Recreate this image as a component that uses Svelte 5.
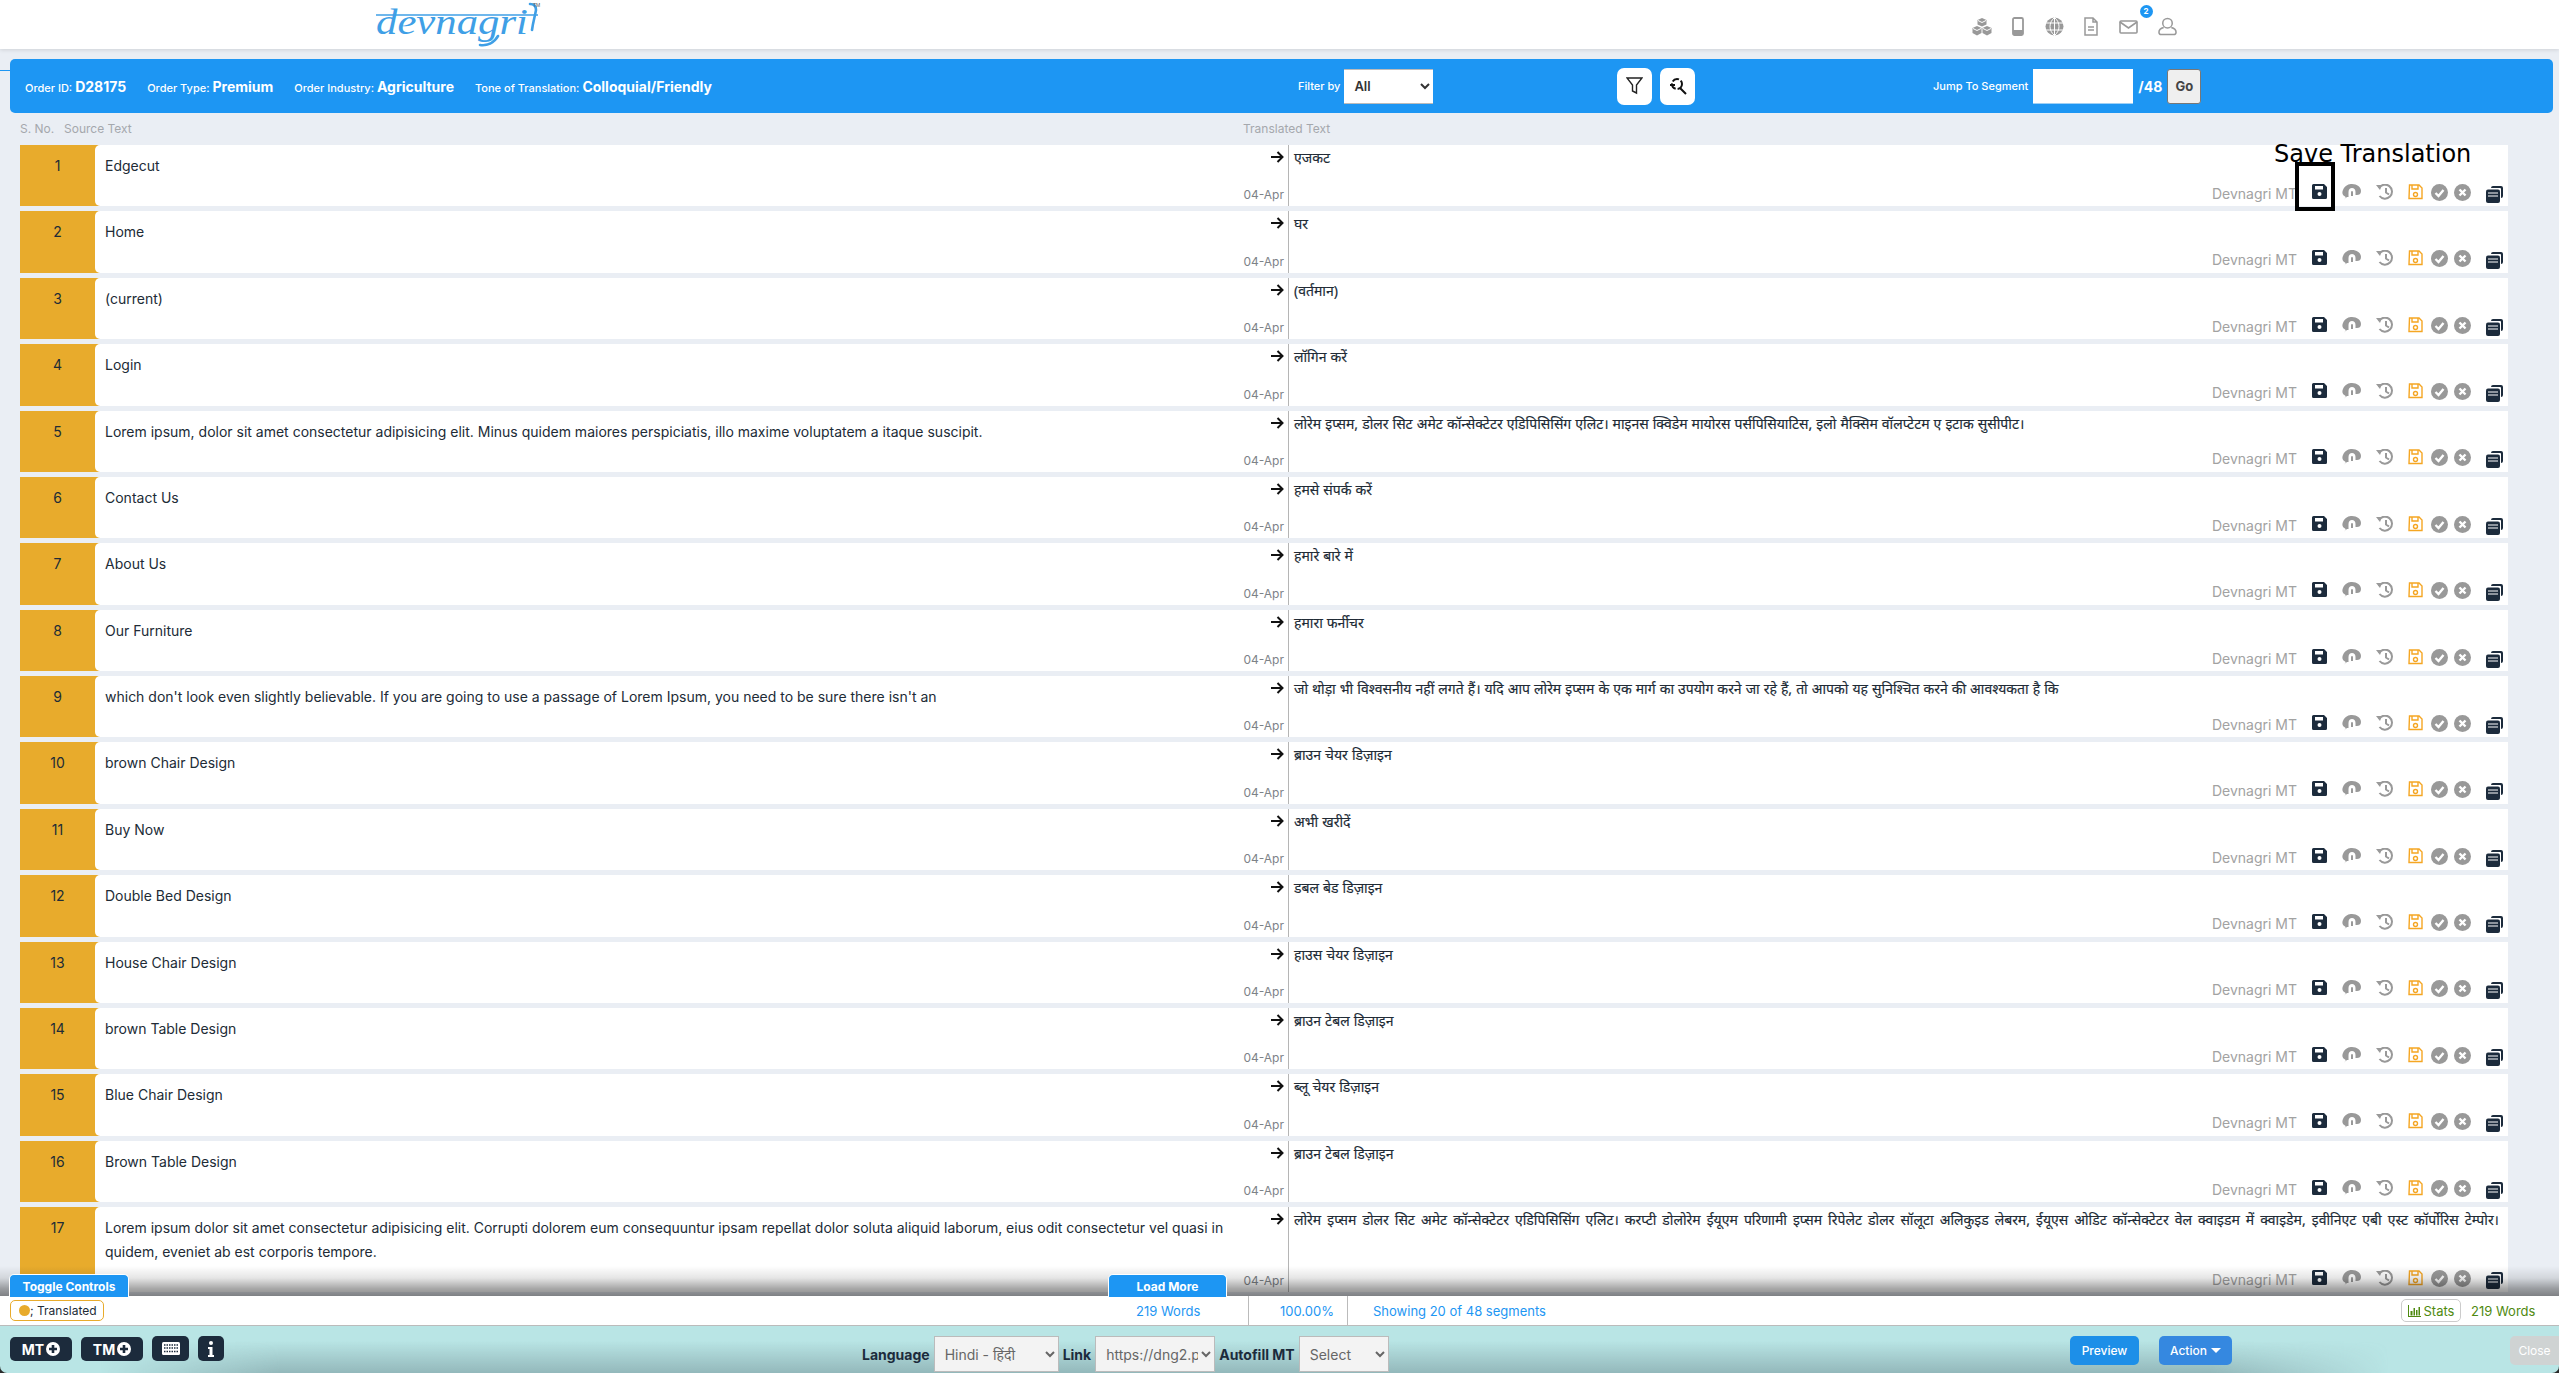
<script>
  const rows = [
    ['Edgecut', 'एजकट'],
    ['Home', 'घर'],
    ['(current)', '(वर्तमान)'],
    ['Login', 'लॉगिन करें'],
    ['Lorem ipsum, dolor sit amet consectetur adipisicing elit. Minus quidem maiores perspiciatis, illo maxime voluptatem a itaque suscipit.', 'लोरेम इप्सम, डोलर सिट अमेट कॉन्सेक्टेटर एडिपिसिसिंग एलिट। माइनस क्विडेम मायोरस पर्सपिसियाटिस, इलो मैक्सिम वॉलप्टेटम ए इटाक सुसीपीट।'],
    ['Contact Us', 'हमसे संपर्क करें'],
    ['About Us', 'हमारे बारे में'],
    ['Our Furniture', 'हमारा फर्नीचर'],
    ["which don't look even slightly believable. If you are going to use a passage of Lorem Ipsum, you need to be sure there isn't an", 'जो थोड़ा भी विश्वसनीय नहीं लगते हैं। यदि आप लोरेम इप्सम के एक मार्ग का उपयोग करने जा रहे हैं, तो आपको यह सुनिश्चित करने की आवश्यकता है कि'],
    ['brown Chair Design', 'ब्राउन चेयर डिज़ाइन'],
    ['Buy Now', 'अभी खरीदें'],
    ['Double Bed Design', 'डबल बेड डिज़ाइन'],
    ['House Chair Design', 'हाउस चेयर डिज़ाइन'],
    ['brown Table Design', 'ब्राउन टेबल डिज़ाइन'],
    ['Blue Chair Design', 'ब्लू चेयर डिज़ाइन'],
    ['Brown Table Design', 'ब्राउन टेबल डिज़ाइन'],
    ['Lorem ipsum dolor sit amet consectetur adipisicing elit. Corrupti dolorem eum consequuntur ipsam repellat dolor soluta aliquid laborum, eius odit consectetur vel quasi in quidem, eveniet ab est corporis tempore.', 'लोरेम इप्सम डोलर सिट अमेट कॉन्सेक्टेटर एडिपिसिसिंग एलिट। करप्टी डोलोरेम ईयूएम परिणामी इप्सम रिपेलेट डोलर सॉलूटा अलिकुइड लेबरम, ईयूएस ओडिट कॉन्सेक्टेटर वेल क्वाइडम में क्वाइडेम, इवीनिएट एबी एस्ट कॉर्पोरिस टेम्पोर।']
  ];
</script>

<div class="page">
  <header class="top">
    <svg class="logo" width="170" height="49" viewBox="0 0 170 49">
      <path d="M2 15 H164" stroke="#3f9fe6" stroke-width="1.6" fill="none"/>
      <path d="M124 36 C120 43 113 46 106 45 M158 30 C159 22 161 16 162 10 C162 6 160 4 156 4" stroke="#3f9fe6" stroke-width="2.6" fill="none" stroke-linecap="round"/>
      <text x="2" y="34" class="logotext" textLength="152" lengthAdjust="spacingAndGlyphs">devnagri</text>
      <text x="159" y="7" class="tm">TM</text>
    </svg>
    <div class="topicons">
      <svg width="20" height="18" viewBox="0 0 20 18" fill="#999"><path d="M10 0l4.500 2v4.500l-4.500 2-4.500-2V2zM5 8l4.500 2v5L5 17.500.5 15v-5zM15 8l4.500 2v5L15 17.500 10.500 15v-5z"/><path d="M6 2.500l4 2 4-2M1 10.500l4 2 4-2M11 10.500l4 2 4-2" stroke="#fff" fill="none"/></svg>
      <svg width="12" height="19" viewBox="0 0 12 19" fill="none" stroke="#999" stroke-width="1.800"><rect x="1" y="1" width="10" height="17" rx="1.500"/><path d="M1 14.500h10M1 16h10" stroke-width="3"/></svg>
      <svg width="19" height="19" viewBox="0 0 19 19" fill="#999"><circle cx="9.500" cy="9.500" r="9"/><path d="M9.500 0v19M0 6h19M0 13h19M9.500 .5c-6 5-6 13 0 18M9.500 .5c6 5 6 13 0 18" stroke="#fff" fill="none"/></svg>
      <svg width="14" height="19" viewBox="0 0 14 19" fill="none" stroke="#999" stroke-width="1.500"><path d="M1 1h8l4 4v13H1zM9 1v4h4M4 10h6M4 13h6"/></svg>
      <div class="mail">
        <svg width="19" height="14" viewBox="0 0 19 14" fill="none" stroke="#999" stroke-width="1.600"><rect x="1" y="1" width="17" height="12" rx="1"/><path d="M1 2l8.500 6L18 2"/></svg>
        <span class="badge">2</span>
      </div>
      <svg width="19" height="19" viewBox="0 0 20 19" fill="none" stroke="#999" stroke-width="1.600"><circle cx="10" cy="6" r="5"/><path d="M6 10.500C2 11.500 1 13.500 1 15.500 1 17 2 18 3.500 18h13c1.500 0 2.500-1 2.500-2.500 0-2-1-4-5-5"/></svg>
    </div>
  </header>

  <main class="main">
    <section class="bar">
      <div class="meta">
        <span>Order ID: <b class="id">D28175</b></span>
        <span>Order Type: <b>Premium</b></span>
        <span>Order Industry: <b>Agriculture</b></span>
        <span>Tone of Translation: <b>Colloquial/Friendly</b></span>
      </div>
      <div class="filter">
        <label for="f">Filter by</label>
        <select id="f" class="barselect"><option>All</option></select>
      </div>
      <div class="tools">
        <button class="tool" aria-label="filter">
          <svg width="17" height="18" viewBox="0 0 17 18" fill="none" stroke="#222" stroke-width="1.400"><path d="M1 1h15l-5.500 7v8l-4-2V8z"/></svg>
        </button>
        <button class="tool" aria-label="search">
          <svg width="18" height="18" viewBox="0 0 18 18" fill="none" stroke="#111" stroke-width="2"><circle cx="8" cy="7" r="5" stroke-dasharray="7 2"/><path d="M11 11l6 6M1 8h5"/></svg>
        </button>
      </div>
      <div class="jump">
        <label for="j">Jump To Segment</label>
        <input id="j" class="jumpinput" />
        <b class="total">/48</b>
        <button class="go">Go</button>
      </div>
    </section>

    <div class="heads">
      <span class="hno">S. No.</span><span class="hsrc">Source Text</span><span class="htgt">Translated Text</span>
    </div>

    <div class="rows">
      {#each rows as r, i}
        <article class="row">
          <div class="num">{i + 1}</div>
          <div class="src">
            <p class="srctext">{r[0]}</p>
            <div class="srcside">
              <svg class="arrow" width="13" height="12" viewBox="0 0 13 12" fill="none" stroke="#111" stroke-width="2"><path d="M0 6h11M6.500 1l5 5-5 5"/></svg>
              <span class="date">04-Apr</span>
            </div>
          </div>
          <div class="tgt">
            <p class="tgttext">{r[1]}</p>
            <div class="actions">
              <span class="mt">Devnagri MT</span>
              <svg class="ic save" width="15" height="15" viewBox="0 0 15 15"><path d="M1.500 0H12l3 3v10.500a1.500 1.500 0 0 1-1.500 1.500h-12A1.500 1.500 0 0 1 0 13.500v-12A1.500 1.500 0 0 1 1.500 0z" fill="#1c2b3c"/><rect x="3" y="2" width="8" height="3.500" fill="#fff"/><circle cx="7.500" cy="10" r="2" fill="#fff"/></svg>
              <svg class="ic brain" width="19" height="16" viewBox="0 0 19 16" fill="#999"><path d="M2 15.500C4 14.500 4 13 3 12.500 0 11 0 8 1 6 3 1 7 0 10 0c5 0 9 3 9 7 0 3-2 4-4 4h-1.500V8c0-2.500-1.500-4-3.500-4S6.500 5.500 6.500 8v5H5z"/><path d="M9 8.500C9 7.500 9.500 7 10 7s1 .5 1 1.500V12H9z"/></svg>
              <svg class="ic hist" width="18" height="16" viewBox="0 0 18 16" fill="none" stroke="#999" stroke-width="2"><path d="M3 4a7 7 0 1 1 .5 8M10 4v4.500l3 2"/><path d="M0 1l6 0-2 5z" fill="#999" stroke="none"/></svg>
              <svg class="ic osave" width="15" height="16" viewBox="0 0 15 16" fill="none" stroke="#f5a623" stroke-width="1.400"><path d="M1.500 1H11l3 3v10.500H1z"/><path d="M4 1v4h6V1"/><circle cx="7.500" cy="10.500" r="2"/></svg>
              <svg class="ic chk" width="17" height="17" viewBox="0 0 17 17"><circle cx="8.500" cy="8.500" r="8.500" fill="#999"/><path d="M4.500 9l3 3 5-6" fill="none" stroke="#fff" stroke-width="2.400"/></svg>
              <svg class="ic tim" width="17" height="17" viewBox="0 0 17 17"><circle cx="8.500" cy="8.500" r="8.500" fill="#999"/><path d="M5.500 5.500l6 6M11.500 5.500l-6 6" fill="none" stroke="#fff" stroke-width="2.400"/></svg>
              <svg class="ic copy" width="17" height="17" viewBox="0 0 17 17" fill="#1c2b3c"><path d="M5 2a2 2 0 0 1 2-2h8a2 2 0 0 1 2 2v8a2 2 0 0 1-2 2V3a1 1 0 0 0-1-1z"/><rect y="3.500" width="14" height="13.500" rx="2"/><path d="M2 7h10M2 10h10" stroke="#fff" stroke-width="1"/></svg>
            </div>
          </div>
        </article>
      {/each}
    </div>

    <div class="hint">
      <span class="hinttext">Save Translation</span>
      <span class="hintbox"></span>
    </div>
  </main>

  <div class="shade"></div>
  <div class="stats">
    <button class="tab toggle">Toggle Controls</button>
    <button class="tab more">Load More</button>
    <span class="legend"><i class="dot"></i>; Translated</span>
    <span class="s words">219 Words</span>
    <span class="s pct">100.00%</span>
    <span class="s showing">Showing 20 of 48 segments</span>
    <button class="statsbtn">
      <svg width="13" height="12" viewBox="0 0 13 12" fill="#4f8a10"><path d="M0 0h1v11h12v1H0zM2.500 6h2v4.500h-2zM5.500 3h1.500v7.500H5.500zM8 5h1.500v5.500H8zM10.500 2H12v8.500h-1.500z"/></svg>
      Stats
    </button>
    <span class="gw">219 Words</span>
  </div>

  <footer class="foot">
    <div class="fleft">
      <button class="dk mtb">MT<svg width="14" height="14" viewBox="0 0 14 14"><circle cx="7" cy="7" r="7" fill="#fff"/><path d="M7 3v8M3 7h8" stroke="#1c2b3c" stroke-width="2.600"/></svg></button>
      <button class="dk mtb">TM<svg width="14" height="14" viewBox="0 0 14 14"><circle cx="7" cy="7" r="7" fill="#fff"/><path d="M7 3v8M3 7h8" stroke="#1c2b3c" stroke-width="2.600"/></svg></button>
      <button class="dk kb" aria-label="keyboard"><svg width="18" height="13" viewBox="0 0 18 13"><rect width="18" height="13" rx="1.500" fill="#fff"/><path d="M2 3h14M2 6h14M2 9.500h14" stroke="#1c2b3c" stroke-width="1.400" stroke-dasharray="1.500 1"/></svg></button>
      <button class="dk info" aria-label="info"><svg width="6" height="16" viewBox="0 0 6 16" fill="#fff"><circle cx="3" cy="2" r="2"/><path d="M0 6h4.500v8H6v2H0v-2h1.500V8H0z"/></svg></button>
    </div>
    <div class="fmid">
      <b class="fl l1">Language</b>
      <select class="fs s1"><option>Hindi - हिंदी</option></select>
      <b class="fl">Link</b>
      <select class="fs s2"><option>https://dng2.pl</option></select>
      <b class="fl">Autofill MT</b>
      <select class="fs s3"><option>Select</option></select>
    </div>
    <div class="fright">
      <button class="pv">Preview</button>
      <button class="ac">Action <i class="caret"></i></button>
      <button class="cl">Close</button>
    </div>
  </footer>
</div>

<style>
  :global(body) { margin: 0; background: #eaeef4; }
  .page { height: 100vh; display: flex; flex-direction: column; overflow: hidden; position: relative; font-family: Inter, "Noto Sans", sans-serif; color: #212b36; background: #2b2b2b; }
  button, select, input { font-family: inherit; }

  .top { height: 49px; flex: none; background: #fff; box-shadow: 0 1px 4px rgba(0,0,0,.12); display: flex; align-items: flex-start; position: relative; z-index: 2; padding-left: 374px; }
  .logo { flex: none; }
  .logotext { font: italic 400 36px "Liberation Serif", serif; fill: #3f9fe6; }
  .tm { font: 5px "Liberation Sans", sans-serif; fill: #555; }
  .topicons { margin-left: auto; margin-right: 382px; display: flex; align-items: center; gap: 20.500px; padding-top: 17px; }
  .mail { position: relative; display: flex; }
  .badge { position: absolute; left: 21px; top: -15px; width: 13px; height: 13px; border-radius: 50%; background: #1d96f3; color: #fff; font-size: 8px; font-weight: 700; display: grid; place-items: center; }

  .main { flex: 1; min-height: 0; overflow: hidden; position: relative; padding-top: 10px; background: #eaeef4; }
  .bar { margin: 0 6px 0 10px; height: 54px; box-sizing: border-box; background: #1d96f3; border-radius: 5px; color: #fff; display: flex; align-items: center; position: relative; padding-left: 15px; }
  .bar::before { content: ""; position: absolute; left: -10px; top: 11px; width: 10px; height: 1px; background: #1d96f3; }
  .meta { display: flex; gap: 21px; font-size: 11px; font-weight: 500; width: 1273px; flex: none; }
  .meta b { font-size: 14px; font-weight: 700; }
  .filter { display: flex; align-items: center; gap: 4px; font-size: 11px; font-weight: 500; width: 319px; flex: none; }
  .barselect { width: 89px; height: 35px; border: 0; background: #fff; font-size: 13px; font-weight: 600; padding-left: 6px; color: #333; border-radius: 0; border-top: 1px solid #bbb; border-bottom: 1px solid #bbb; }
  .tools { display: flex; gap: 8px; width: 316px; flex: none; }
  .tool { width: 35px; height: 37px; border: 0; background: #fff; border-radius: 7px; display: grid; place-items: center; padding: 0; }
  .jump { display: flex; align-items: center; gap: 5px; font-size: 11px; font-weight: 500; }
  .jumpinput { width: 100px; height: 35px; box-sizing: border-box; border: 0; border-bottom: 1px solid #9fd0f5; background: #fff; }
  .total { font-size: 14px; }
  .go { width: 34px; height: 35px; background: #efefef; border: 1px solid #777; border-radius: 3px; font-size: 13px; font-weight: 700; color: #444; padding: 0; }

  .heads { display: flex; height: 30px; padding-bottom: 2px; align-items: center; font-size: 12px; color: #a5a8ad; }
  .hno { margin-left: 20px; width: 44px; }
  .hsrc { width: 1179px; }

  .rows { margin: 0 51px 0 20px; display: flex; flex-direction: column; gap: 5px; }
  .row { display: grid; grid-template-columns: 75px 1193px 1fr; background: #fff; flex: none; }
  .num { background: #e8ab2c; text-align: center; font-size: 14px; line-height: 24px; padding-top: 9px; margin-right: -5px; padding-right: 5px; }
  .src { position: relative; display: flex; padding: 9px 0 0 10px; border-radius: 5px 0 0 5px; background: #fff; box-sizing: border-box; justify-content: space-between; }
  .srctext { margin: 0; font-size: 14px; line-height: 24px; color: #212b36; width: 1130px; padding-bottom: 28.375px; }
  .srcside { display: flex; flex-direction: column; justify-content: space-between; align-items: flex-end; margin-top: -4px; padding-right: 4px; }
  .arrow { margin-top: 1px; }
  .date { font-size: 12px; color: #7d8288; line-height: 16px; padding-bottom: 3px; }
  .tgt { border-left: 1px solid #b5b5b5; display: flex; flex-direction: column; justify-content: space-between; padding-left: 5px; position: relative; }
  .tgttext { margin: 0; padding-top: 3px; font-family: "Noto Sans", sans-serif; font-size: 14px; line-height: 19px; color: #212b36; -webkit-text-stroke: .15px #212b36; word-spacing: .4px; }
  .row:last-child .tgttext { word-spacing: 2.400px; }
  .actions { display: flex; align-items: flex-start; padding-bottom: 4.500px; height: 18px; padding-right: 5px; justify-content: flex-end; }
  .mt { font-size: 14px; color: #a2a2a2; line-height: 20px; margin-right: 15px; }
  .ic { flex: none; }
  .brain { margin-left: 15px; }
  .hist { margin-left: 15px; }
  .osave { margin-left: 14px; }
  .chk { margin-left: 8px; }
  .tim { margin-left: 6px; }
  .copy { margin-left: 15px; margin-top: 2px; }

  .hint { position: absolute; left: 2274px; top: 91px; width: 200px; height: 71px; }
  .hinttext { display: block; font: 24px/28px "DejaVu Sans", sans-serif; color: #000; white-space: nowrap; }
  .hintbox { position: absolute; left: 21px; top: 22px; width: 40px; height: 49px; box-sizing: border-box; border: 4px solid #000; }

  .shade { position: absolute; left: 0; right: 0; top: 1266px; height: 30px; background: linear-gradient(to bottom, rgba(0,0,0,0), rgba(0,0,0,.1) 40%, rgba(0,0,0,.34) 75%, rgba(0,0,0,.46) 100%); pointer-events: none; z-index: 3; }
  .stats { height: 29px; flex: none; background: #fff; border-bottom: 1px solid #bbb; position: relative; z-index: 4; display: flex; align-items: center; font-size: 13px; }
  .tab { position: absolute; top: -22px; height: 23px; background: #1d96f3; color: #fff; border: 1px solid #fff; border-bottom: 0; border-radius: 5px 5px 0 0; font-size: 12px; font-weight: 700; padding: 0; }
  .toggle { left: 9px; width: 120px; }
  .more { left: 1108px; width: 119px; }
  .legend { margin-left: 10px; width: 94px; height: 21px; box-sizing: border-box; border: 1px solid #e8ab2c; border-radius: 5px; display: flex; align-items: center; font-size: 12px; padding-left: 8px; white-space: pre; }
  .dot { width: 11px; height: 11px; border-radius: 50%; background: #e8ab2c; }
  .s { color: #1d96f3; align-self: stretch; display: flex; align-items: center; }
  .words { margin-left: 1032px; width: 112px; border-right: 1px solid #bbb; }
  .pct { width: 67px; padding-left: 31px; border-right: 1px solid #bbb; }
  .showing { padding-left: 25px; }
  .statsbtn { margin-left: auto; width: 60px; height: 23px; background: #fff; border: 1px solid #ccc; border-radius: 5px; color: #4f8a10; font-size: 13px; display: flex; align-items: center; justify-content: center; gap: 3px; padding: 0; }
  .gw { color: #4f8a10; margin: 0 23px 0 10px; width: 65px; white-space: nowrap; }

  .foot { height: 47px; flex: none; box-sizing: border-box; position: relative; display: flex; align-items: flex-start; padding-top: 10px; border-radius: 0 0 7px 7px; background: #b9e5e5; overflow: hidden; }
  .foot::before { content: ""; position: absolute; left: 100px; right: 170px; bottom: 0; height: 32px; background: linear-gradient(to bottom, rgba(110,140,145,0), rgba(110,140,145,.5)); -webkit-mask-image: linear-gradient(to right, transparent, #000 180px, #000 calc(100% - 180px), transparent); mask-image: linear-gradient(to right, transparent, #000 180px, #000 calc(100% - 180px), transparent); }
  .fleft, .fmid, .fright { z-index: 1; }
  .fleft { display: flex; gap: 9px; margin-left: 10px; width: 214px; flex: none; align-items: flex-start; position: relative; }
  .dk { background: #1c2b3c; color: #fff; border: 0; border-radius: 5px; height: 25px; display: flex; align-items: center; justify-content: center; gap: 2px; font-size: 14px; font-weight: 700; padding: 0; }
  .mtb { width: 62px; height: 24px; margin-top: 1px; }
  .kb { width: 37px; }
  .info { width: 26px; }
  .fmid { display: flex; align-items: center; gap: 4px; margin-left: 638px; width: 1100px; flex: none; position: relative; }
  .fl { font-size: 14px; font-weight: 700; color: #1c2b3c; white-space: nowrap; }
  .fs { height: 36px; border: 1px solid #bbb; background: #f3f3f3; color: #666; font-size: 14px; padding-left: 6px; border-radius: 0; box-sizing: border-box; }
  .s1 { width: 125px; }
  .s2 { width: 120px; }
  .s3 { width: 90px; }
  .fright { display: flex; position: absolute; left: 2070px; right: 0; top: 10px; }
  .pv, .ac { height: 29px; color: #fff; border: 0; border-radius: 5px; font-size: 12px; padding: 0; font-weight: 500; }
  .pv { width: 69px; background: #1d8fe8; }
  .ac { width: 73px; background: #3588e0; margin-left: 20px; display: flex; align-items: center; justify-content: center; gap: 4px; }
  .caret { border: 5px solid transparent; border-top-color: #fff; border-bottom: 0; width: 0; height: 0; }
  .cl { margin-left: auto; width: 49px; height: 29px; background: #cfd3d3; color: #fff; border: 0; border-radius: 5px 0 0 5px; font-size: 12px; padding: 0; }
</style>
